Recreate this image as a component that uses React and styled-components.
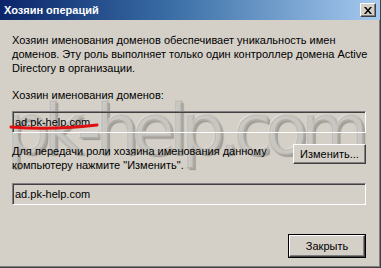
import React from 'react'
import styled, { createGlobalStyle } from 'styled-components'

const Global = createGlobalStyle`
  html, body { margin: 0; padding: 0; background: #d4d0c8; }
  body { font-family: "Liberation Sans", Arial, sans-serif; }
`

const Window = styled.div`
  position: relative;
  width: 381px;
  height: 268px;
  box-sizing: border-box;
  background: #d4d0c8;
  border-right: 1px solid #404040;
  border-bottom: 1px solid #404040;
  box-shadow: inset -1px -1px 0 #808080;
  display: flex;
  flex-direction: column;
  overflow: hidden;
`

const TitleBar = styled.div`
  height: 20px;
  flex: none;
  display: flex;
  align-items: center;
  justify-content: space-between;
  padding: 0 4px 0 4px;
  background: linear-gradient(to right, #0a246a 0%, #3a6ea5 45%, #a6caf0 100%);
`

const Title = styled.span`
  color: #fff;
  font-weight: bold;
  font-size: 11px;
`

const CloseBox = styled.div`
  width: 16px;
  height: 14px;
  box-sizing: border-box;
  background: #d4d0c8;
  border-top: 1px solid #fff;
  border-left: 1px solid #fff;
  border-right: 1px solid #404040;
  border-bottom: 1px solid #404040;
  box-shadow: inset -1px -1px 0 #808080;
  display: flex;
  align-items: center;
  justify-content: center;
`

const Content = styled.div`
  position: relative;
  flex: 1;
  padding: 13px 14px 0 12px;
  display: flex;
  flex-direction: column;
  font-size: 11px;
  line-height: 14px;
  color: #000;
  white-space: nowrap;
  > * { position: relative; z-index: 1; }
`

const Para = styled.p`
  margin: 0;
`

const Label = styled.div`
  margin-top: ${p => p.$top}px;
`

const Field = styled.div`
  height: 22px;
  box-sizing: border-box;
  margin-top: ${p => p.$top}px;
  padding: 3px 2px;
  border-top: 1px solid #808080;
  border-left: 1px solid #808080;
  border-right: 1px solid #fff;
  border-bottom: 1px solid #fff;
  box-shadow: inset 1px 1px 0 #404040;
  line-height: 14px;
`

const Row = styled.div`
  display: flex;
  align-items: flex-start;
  justify-content: space-between;
  margin-top: ${p => p.$top}px;
`

const Button = styled.button`
  font: inherit;
  font-size: 11px;
  color: #000;
  width: ${p => p.$w}px;
  height: ${p => p.$h}px;
  padding: 0;
  background: #d4d0c8;
  border-top: 1px solid #fff;
  border-left: 1px solid #fff;
  border-right: 1px solid #404040;
  border-bottom: 1px solid #404040;
  box-shadow: inset -1px -1px 0 #808080;
  outline: ${p => (p.$default ? '1px solid #000' : 'none')};
  flex: none;
`

const Footer = styled.div`
  display: flex;
  justify-content: flex-end;
  margin-top: 30px;
  padding-right: 1px;
`

const Watermark = styled.div`
  position: absolute !important;
  z-index: 0 !important;
  left: 6px;
  top: 74px;
  font-family: "DejaVu Sans", sans-serif;
  font-size: 70px;
  line-height: 72px;
  letter-spacing: -7px;
  color: rgba(180, 177, 170, 0.6);
  -webkit-text-stroke: 2px rgba(180, 177, 170, 0.6);
  text-shadow: -1px -1px 0 rgba(255, 255, 255, 0.75), 2px 2px 1px rgba(110, 108, 102, 0.55);
  pointer-events: none;
  white-space: nowrap;
`

const Scribble = styled.svg`
  position: absolute;
  left: 0;
  top: 0;
  z-index: 2;
  pointer-events: none;
`

export default function App() {
  return (
    <>
      <Global />
      <Window>
        <TitleBar>
          <Title>Хозяин операций</Title>
          <CloseBox>
            <svg width="8" height="7" viewBox="0 0 8 7">
              <path d="M0 0h2l2 2.5L6 0h2L5 3.5 8 7H6L4 4.5 2 7H0l3-3.5z" fill="#000" />
            </svg>
          </CloseBox>
        </TitleBar>
        <Content>
          <Watermark>pk-help.com</Watermark>
          <Para>
            Хозяин именования доменов обеспечивает уникальность имен<br />
            доменов. Эту роль выполняет только один контроллер домена Active<br />
            Directory в организации.
          </Para>
          <Label $top={13}>Хозяин именования доменов:</Label>
          <Field $top={9}>ad.pk-help.com</Field>
          <Row $top={11}>
            <Para>
              Для передачи роли хозяина именования данному<br />
              компьютеру нажмите "Изменить".
            </Para>
            <Button $w={73} $h={20}>Изменить...</Button>
          </Row>
          <Field $top={11}>ad.pk-help.com</Field>
          <Footer>
            <Button $w={76} $h={22} $default>Закрыть</Button>
          </Footer>
        </Content>
        <Scribble width="381" height="268">
          <path d="M11 127 C 35 129, 70 128, 97 125" stroke="#e01010" strokeWidth="3" fill="none" strokeLinecap="round" />
        </Scribble>
      </Window>
    </>
  )
}
